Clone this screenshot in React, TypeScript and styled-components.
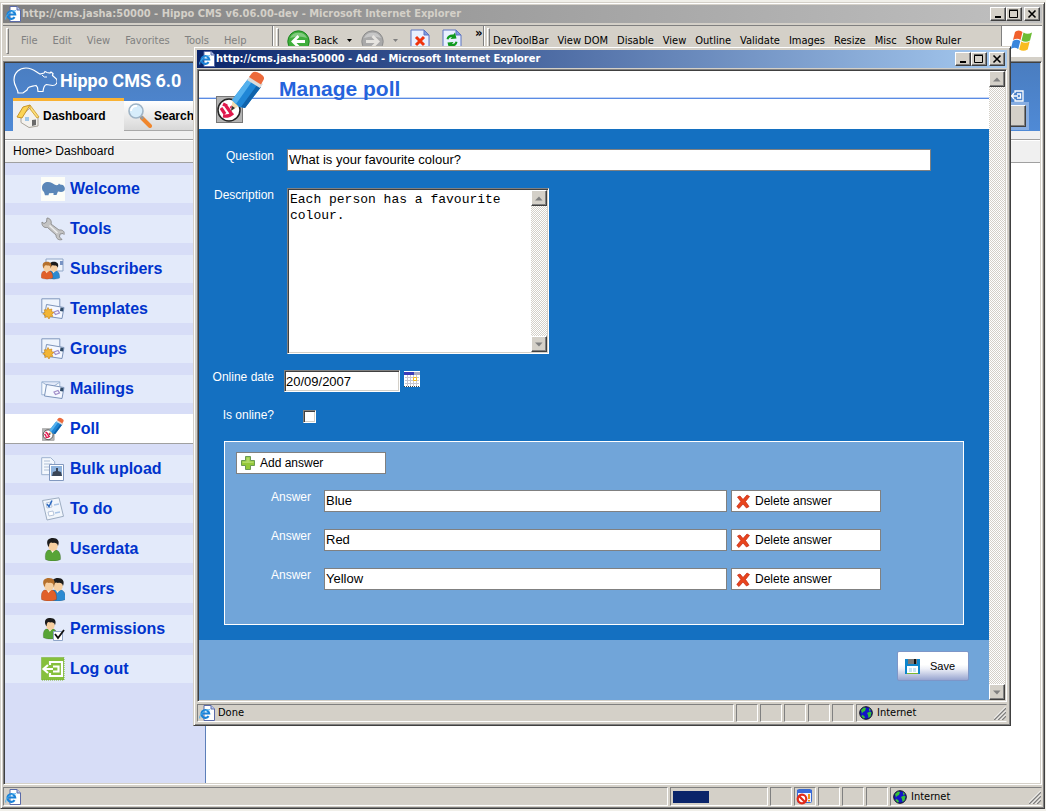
import React from "react";
import styled, { createGlobalStyle, css } from "styled-components";

const face = "#d4d0c8";
const ui = `"DejaVu Sans Condensed", "Noto Sans", sans-serif`;
const arial = `"Liberation Sans", Arial, sans-serif`;

const Global = createGlobalStyle`
  *, *::before, *::after { box-sizing: border-box; }
  html, body, #root { height: 100%; }
  body { margin: 0; background: #f0efe9; font-family: ${arial}; font-size: 12px; color: #000; }
  button, input, textarea { font-family: inherit; color: inherit; margin: 0; border-radius: 0; }
  svg { display: block; flex: none; }
`;

/* ---------- window chrome ---------- */

const Desktop = styled.div`
  position: relative;
  display: flex;
  min-height: 100vh;
  padding: 2px 1px 2px 0;
`;

const windowFrame = css`
  display: flex;
  flex-direction: column;
  background: ${face};
  border: 1px solid;
  border-color: ${face} #404040 #404040 ${face};
  box-shadow: inset 1px 1px #fff, inset -1px -1px #808080;
`;

const MainWindow = styled.div`
  ${windowFrame}
  flex: 1;
  min-width: 0;
  padding: 2px;
`;

const Dialog = styled.section`
  ${windowFrame}
  position: absolute;
  inset: 46px 35px 85px 193px;
  padding: 3px;
`;

const TitleBar = styled.header<{ $active?: boolean }>`
  display: flex;
  align-items: center;
  height: 18px;
  margin-bottom: 1px;
  padding: 0 2px;
  gap: 1px;
  font: bold 11px/18px ${ui};
  white-space: nowrap;
  color: ${(p) => (p.$active ? "#fff" : face)};
  background: ${(p) =>
    p.$active
      ? "linear-gradient(90deg, #0a246a, #a6caf0)"
      : "linear-gradient(90deg, #808080, #c0c0c0)"};
`;

const TitleText = styled.span`
  flex: 1;
  overflow: hidden;
`;

const raised = css`
  background: ${face};
  border: 1px solid;
  border-color: #fff #404040 #404040 #fff;
  box-shadow: inset -1px -1px #808080;
`;

const CaptionGroup = styled.div`
  display: flex;
`;

const CaptionButton = styled.button`
  ${raised}
  display: grid;
  place-items: center;
  width: 16px;
  height: 14px;
  padding: 0;
  &:last-child { margin-left: 2px; }
`;

const Client = styled.div`
  display: flex;
  flex: 1;
  min-height: 0;
  border: 1px solid;
  border-color: #808080 #fff #fff #808080;
  box-shadow: inset 1px 1px #404040, inset -1px -1px ${face};
  padding: 1px;
`;

const StatusBar = styled.footer<{ $h: number }>`
  display: flex;
  gap: 2px;
  height: ${(p) => p.$h}px;
  margin-top: 2px;
  font: 11px/16px ${ui};
`;

const StatusCell = styled.div<{ $w?: number }>`
  display: flex;
  align-items: center;
  gap: 3px;
  padding-left: 1px;
  overflow: hidden;
  border: 1px solid;
  border-color: #808080 #fff #fff #808080;
  ${(p) => (p.$w ? `flex: none; width: ${p.$w}px;` : "flex: 1;")}
`;

const ZoneCell = styled(StatusCell)`
  gap: 4px;
  border-right-color: ${face};
  padding-left: 2px;
`;

const ZoneName = styled.span`
  flex: 1;
`;

const Progress = styled.div`
  width: 36px;
  height: 12px;
  margin-left: 1px;
  background: #0a246a;
`;

/* ---------- browser toolbar ---------- */

const Toolbar = styled.div`
  display: flex;
  height: 32px;
  margin: 1px 0 4px;
  border-top: 1px solid #808080;
  border-bottom: 1px solid #fff;
  font: 11px/14px ${ui};
  white-space: nowrap;
`;

const Band = styled.div<{ $w?: number; $gap: number }>`
  display: flex;
  align-items: center;
  gap: ${(p) => p.$gap}px;
  padding-left: 3px;
  border-right: 1px solid #808080;
  box-shadow: 1px 0 #fff;
  ${(p) => (p.$w ? `flex: none; width: ${p.$w}px;` : "flex: 1;")}
`;

const Grip = styled.i`
  width: 3px;
  height: 26px;
  border: 1px solid;
  border-color: #fff #808080 #808080 #fff;
`;

const MenuButton = styled.button<{ $muted?: boolean }>`
  padding: 0;
  border: 0;
  background: none;
  font: inherit;
  color: ${(p) => (p.$muted ? "#808080" : "#000")};
`;

const MenuGroup = styled.nav<{ $gap: number; $pad: number }>`
  display: flex;
  gap: ${(p) => p.$gap}px;
  padding-left: ${(p) => p.$pad}px;
`;

const ToolButton = styled(MenuButton)`
  display: flex;
  align-items: center;
  gap: 4px;
`;

const PageTools = styled.div`
  display: flex;
  gap: 12px;
  padding: 0 5px 0 3px;
`;

const Chevron = styled.span`
  align-self: flex-start;
  font: bold 13px/14px ${ui};
`;

const Brand = styled.div`
  display: grid;
  place-items: center;
  width: 40px;
  background: #fff;
`;

/* ---------- CMS page behind the dialog ---------- */

const CmsPage = styled.div`
  flex: 1;
  display: flex;
  flex-direction: column;
  min-width: 0;
  background: #fff;
`;

const CmsHeader = styled.div`
  display: flex;
  justify-content: space-between;
  height: 68px;
  padding: 0 11px 0 8px;
  background: linear-gradient(#4a7dc0, #4f8ad6);
`;

const Logo = styled.div`
  display: flex;
  align-items: center;
  height: 35px;
  gap: 3px;
  color: #fff;
  font: bold 18px/35px Roboto, sans-serif;
  white-space: nowrap;
`;

const Tabs = styled.nav`
  display: flex;
`;

const Tab = styled.a<{ $active?: boolean }>`
  display: flex;
  align-items: center;
  gap: 2px;
  width: 111px;
  height: 33px;
  padding-left: 3px;
  border-top: 3px solid ${(p) => (p.$active ? "#f9b233" : "transparent")};
  border-bottom: ${(p) => (p.$active ? "0" : "1px solid #a8a8a8")};
  background: ${(p) => (p.$active ? "#f0f0f0" : "linear-gradient(#fff, #d8d8d8)")};
  background-clip: padding-box;
  color: #000;
  font-weight: bold;
  text-decoration: none;
`;

const HeaderActions = styled.div`
  display: flex;
  flex-direction: column;
  align-items: flex-end;
  padding-top: 27px;
`;

const IconLink = styled.a`
  padding-right: 5px;
`;

const HeaderButton = styled.button`
  ${raised}
  width: 60px;
  height: 22px;
  margin: 3px 3px 0 0;
  outline: 3px solid #88aee2;
`;

const HeaderStrip = styled.div`
  height: 9px;
  background: #f0f0f0;
  border-bottom: 1px solid #a0a0a0;
`;

const Breadcrumb = styled.div`
  height: 23px;
  padding-left: 8px;
  line-height: 21px;
  background: #f0f0f0;
  border-top: 1px solid #fff;
  border-bottom: 1px solid #a0a0a0;
`;

const CmsBody = styled.div`
  display: flex;
  flex: 1;
`;

const Sidebar = styled.nav`
  display: flex;
  flex-direction: column;
  gap: 12px;
  width: 201px;
  padding-top: 12px;
  background: #d7ddf7;
  border-right: 1px solid #5c7fb9;
`;

const SideItem = styled.a<{ $active?: boolean }>`
  display: flex;
  align-items: center;
  gap: 5px;
  height: 28px;
  padding-left: 36px;
  background: #e3eafa;
  color: #03c;
  font-size: 16px;
  font-weight: bold;
  text-decoration: none;
  ${(p) =>
    p.$active &&
    css`
      height: 30px;
      margin: -1px 0;
      background: #fff;
      border-bottom: 1px solid #a0a0a0;
    `}
`;

/* ---------- poll form ---------- */

const PollPage = styled.main`
  flex: 1;
  display: flex;
  flex-direction: column;
  min-width: 0;
`;

const PollHeader = styled.div`
  display: flex;
  gap: 15px;
  height: 58px;
  padding-left: 15px;
  background: linear-gradient(transparent 26px, #c5d6f6 26px, #c5d6f6 27px, #5a8be4 27px, #5a8be4 28px, transparent 28px) #fff;
`;

const PollTitle = styled.h1`
  margin: 0;
  font: bold 21px/36px ${arial};
  color: #2563dc;
`;

const Form = styled.form`
  flex: 1;
  display: flex;
  flex-direction: column;
`;

const Fields = styled.div`
  display: flex;
  flex-direction: column;
  gap: 16px;
  padding: 20px 25px 15px 0;
  background: #1470c1;
`;

const FieldRow = styled.div<{ $gap: number; $h: number }>`
  display: flex;
  align-items: flex-start;
  gap: ${(p) => p.$gap}px;
  min-height: ${(p) => p.$h}px;
  padding-right: 33px;
`;

const Label = styled.label`
  width: 75px;
  flex: none;
  text-align: right;
  line-height: 14px;
  color: #fff;
`;

const TextInput = styled.input`
  flex: 1;
  min-width: 0;
  height: 22px;
  padding: 0 1px 1px;
  border: 1px solid #808080;
  background: #fff;
  font-size: 13px;
  outline: 0;
`;

const sunken = css`
  border: 1px solid;
  border-color: #808080 #fff #fff #808080;
  box-shadow: inset 1px 1px #404040, inset -1px -1px ${face};
  background: #fff;
`;

const DateInput = styled.input`
  ${sunken}
  width: 116px;
  height: 22px;
  padding: 1px;
  font-size: 13px;
`;

const DateGroup = styled.div`
  display: flex;
  gap: 4px;
`;

const CalendarButton = styled.button`
  padding: 1px 0 0;
  border: 0;
  background: none;
  height: 17px;
`;

const CheckBox = styled.input`
  ${sunken}
  appearance: none;
  width: 13px;
  height: 13px;
  margin-top: 2px;
`;

const TextBox = styled.div`
  ${sunken}
  display: flex;
  width: 262px;
  height: 166px;
  padding: 1px;
`;

const TextArea = styled.textarea`
  flex: 1;
  min-width: 0;
  padding: 2px 1px;
  border: 0;
  outline: 0;
  resize: none;
  overflow: hidden;
  background: transparent;
  font: 13px/16px "Liberation Mono", "Courier New", monospace;
`;

const ScrollTrack = styled.div`
  display: flex;
  flex-direction: column;
  justify-content: space-between;
  flex: none;
  width: 16px;
  background: repeating-conic-gradient(#fff 0 25%, ${face} 0 50%) 0 0 / 2px 2px;
`;

const ScrollButton = styled.button`
  ${raised}
  display: grid;
  place-items: center;
  width: 16px;
  height: 16px;
  padding: 0;
`;

const Answers = styled.fieldset`
  min-width: 0;
  margin: 0 0 0 25px;
  padding: 10px 11px 34px;
  border: 1px solid #fff;
  background: #71a5d9;
`;

const AnswerList = styled.div`
  display: flex;
  flex-direction: column;
  gap: 17px;
  padding: 16px 71px 0 0;
`;

const AnswerRow = styled.div`
  display: flex;
  gap: 4px;
`;

const AnswerField = styled.div`
  display: flex;
  flex: 1;
  gap: 13px;
`;

const ActionButton = styled.button`
  display: flex;
  align-items: center;
  gap: 5px;
  width: 150px;
  height: 22px;
  padding: 0 4px;
  border: 1px solid #808080;
  background: #fff;
  font-size: 12px;
`;

const FormFooter = styled.div`
  flex: 1;
  display: flex;
  justify-content: flex-end;
  align-items: flex-start;
  padding: 11px 20px 0;
  background: #71a5d9;
`;

const SaveButton = styled.button`
  display: flex;
  align-items: center;
  gap: 10px;
  width: 72px;
  height: 30px;
  padding: 0 7px;
  border: 1px solid #7d96c8;
  border-radius: 2px;
  background: linear-gradient(#fff 45%, #eef0f8 60%, #98a5d0);
  font-size: 11px;
`;

/* ---------- icons ---------- */

const IePage = () => (
  <svg width="16" height="16" viewBox="0 0 16 16">
    <path d="M5 .5h7l3.500 3.500v11.500H5z" fill="#fff" stroke="#5a6aa8" />
    <path d="M12 .5V4h3.500" fill="#b9c8ee" stroke="#5a6aa8" />
    <path d="M9.600 11.100A3.900 3.900 0 1 1 10.200 8.500H3" fill="none" stroke="#1a82d8" strokeWidth="2.100" />
    <path d="M.8 13.500C-.5 10 7 3.500 11.200 4.800" fill="none" stroke="#4db1f0" strokeWidth="1" />
  </svg>
);

const Globe = () => (
  <svg width="14" height="14" viewBox="0 0 14 14">
    <circle cx="7" cy="7" r="6.300" fill="#1414c8" stroke="#111" />
    <path d="M2 4l3-2.500 2 .5-1 3-2 1-1 1.500zM8 7l3-1.500 1.500 1-1 4-2 1.500-.5-3zM10 2l2 2-2 1z" fill="#35c235" />
    <path d="M3 9.500l2.500 2.500" stroke="#35c235" strokeWidth="1.800" />
  </svg>
);

const Blocked = () => (
  <svg width="17" height="16" viewBox="0 0 17 16">
    <rect x="1.500" y=".5" width="14" height="13" rx="1" fill="#eef3ff" stroke="#3a6ad0" />
    <path d="M1 1h15v3H1z" fill="#3a6ad8" />
    <path d="M12 5h2v5h-2zM12 11h2v1.500h-2z" fill="#f09018" />
    <circle cx="6" cy="10" r="4.300" fill="#fff" stroke="#e02a1a" strokeWidth="2.200" />
    <path d="M3 7l6 6" stroke="#e02a1a" strokeWidth="2.200" />
  </svg>
);

const ResizeGrip = () => (
  <svg width="12" height="14" viewBox="0 0 12 14">
    <path d="M0 14L12 2M4 14l8-8M8 14l4-4" stroke="#808080" strokeWidth="1.500" />
    <path d="M-1.500 14L12 .5M2.500 14L12 4.500M6.500 14L12 8.500" stroke="#fff" />
  </svg>
);

const Arrow = ({ down, color = "#808080" }: { down?: boolean; color?: string }) => (
  <svg width="8" height="5" viewBox="0 0 8 5">
    <path d={down ? "M0 .5h7.500L4 4.500z" : "M0 4.500h7.500L4 .5z"} fill={color} />
  </svg>
);

const DropArrow = ({ color = "#808080" }: { color?: string }) => (
  <svg width="7" height="4" viewBox="0 0 7 4">
    <path d="M1 0h5L3.500 3z" fill={color} />
  </svg>
);

const RoundArrow = ({ back }: { back?: boolean }) => (
  <svg width="23" height="23" viewBox="0 0 23 23">
    <circle cx="11.500" cy="11.500" r="10.700" fill={back ? "#3fae3c" : "#a9a9a9"} stroke={back ? "#1d8420" : "#8d8d8d"} />
    <path d="M3 8a9 8 0 0 1 17 0q-8-3-17 0z" fill="#fff" opacity=".35" />
    <path
      d={back ? "M18 11.500H6M11.500 6L6 11.500l5.500 5.500" : "M5 11.500h12M11.500 6l5.500 5.500-5.500 5.500"}
      fill="none"
      stroke={back ? "#fff" : "#e6e4e0"}
      strokeWidth="2.800"
    />
  </svg>
);

const PageIcon = ({ refresh }: { refresh?: boolean }) => (
  <svg width="20" height="24" viewBox="0 0 20 24">
    <path d="M1 1h13l5 5v17.500H1z" fill="#e8efff" stroke="#5c74c0" />
    <path d="M14 1v5h5z" fill="#7f9ae0" stroke="#5c74c0" />
    {refresh ? (
      <path d="M4.500 10q1-5 7-4.500l1.500-2 1.500 6-6 .5 1.500-2q-3 0-3.500 2.500zM15.500 13q-1 5-7 4.500l-1.500 2-1.500-6 6-.5-1.500 2q3 0 3.500-2.500z" fill="#0e9a1e" />
    ) : (
      <path d="M6 8l8 8M14 8l-8 8" stroke="#f0330c" strokeWidth="3" />
    )}
  </svg>
);

const Flag = () => (
  <svg width="24" height="24" viewBox="0 0 24 24">
    <path d="M5 3q4-3 7.500 0l-2 8q-3-2.500-7.500 0z" fill="#f0602c" />
    <path d="M13.500 3.500q4 2.500 8.500 0l-2 8q-4 2.500-8.500 0z" fill="#6cbc34" />
    <path d="M2.800 12q4-2.500 7.500 0l-2 8q-3.500-2.500-7.500 0z" fill="#3a86dc" />
    <path d="M11.200 12.500q4 2.500 8.500 0l-2 8q-4.500 2.500-8.500 0z" fill="#f8bc20" />
  </svg>
);

const HippoLogo = () => (
  <svg width="44" height="28" viewBox="0 0 44 28">
    <path
      d="M5 26C5 22 1 19 1 13 1 5 7 1 13 1c7 0 10 4 14 6l4-1 1-1.500 2 1 3 .5 1-1 2 1.500-.5 2 4 3.500c2 4-1 6.500-4 6.500l-6-1c-3 1-3 4-3.500 7H25l-.5-4-1.500-2c-4 1-7 1-8 2.500L14 23l-4 3z"
      fill="none"
      stroke="#fff"
      strokeWidth="1.200"
    />
    <path d="M29 8q2 3 5 2" fill="none" stroke="#fff" />
  </svg>
);

const House = () => (
  <svg width="25" height="24" viewBox="0 0 25 24">
    <path d="M5 12l9-8 8 9v9l-9 1.500-8-5z" fill="#f4f2ee" stroke="#a9a49a" />
    <path d="M1 13L7 3l7-2-8 13z" fill="#fbd455" stroke="#c99526" />
    <path d="M14 1l9 12-2 1-7-9z" fill="#fce07c" stroke="#c99526" strokeWidth=".8" />
    <path d="M16 22v-6l4-.5V21z" fill="#6a6a6a" />
    <path d="M9 13h4v4H9z" fill="#9fc7ea" />
  </svg>
);

const Magnifier = () => (
  <svg width="25" height="25" viewBox="0 0 25 25">
    <path d="M15 15l8 8" stroke="#f0862c" strokeWidth="4" strokeLinecap="round" />
    <path d="M13 12l3 4" stroke="#999" strokeWidth="3" />
    <circle cx="9" cy="8" r="7" fill="#d7edfb" stroke="#9fb4c6" strokeWidth="1.600" />
    <path d="M4 8a5 5 0 0 1 6-5" fill="none" stroke="#fff" strokeWidth="2" />
  </svg>
);

const exitPath = "M9 8V5h12v14H9v-3M12 9.500h5.500v5H12M2 12h10M7 8l-4.500 4L7 16";

const ExitSmall = () => (
  <svg width="13" height="12" viewBox="0 0 13 12">
    <path d="M4 3V1h8v10H4V9M6 4h3.500v4H6M0 6h7M3 3L.7 6 3 9" fill="none" stroke="#fff" strokeWidth="1.300" />
  </svg>
);

const Hippo = () => (
  <svg width="24" height="24" viewBox="0 0 24 24">
    <path d="M0 0h24v24H0z" fill="#fcfdf8" />
    <path d="M1 11c0-6 6-7 10-5 2 1.500 4 2.500 6 2l1-1.500 1 1 3 .5c2 2 2.500 4 1 6-2 1.500-4 1-6 .5l-1.500 3.500h-3v-2l-4.500.3-.5 2H4L3 15c-1-1-2-2-2-4z" fill="#5b87b8" />
  </svg>
);

const Wrench = () => (
  <svg width="24" height="24" viewBox="0 0 24 24">
    <path d="M6 1l-.5 4L3 6.500 1 5c-.5 4 2 6 5.500 5.500l8.500 7.500c0 4 3 5.500 6 4.500l-2.500-2.500.5-3 3-.5 1 1c1-3-1.500-5-5-4.500L10 7c1-3-1-6-4-6z" fill="#c4c4c4" stroke="#8a8a8a" strokeWidth=".9" />
    <path d="M8.500 8.500l8 7.500" stroke="#eee" strokeWidth="1.500" />
  </svg>
);

const Person = ({ x = 0, hair, body }: { x?: number; hair: string; body: string }) => (
  <g transform={`translate(${x} 0)`}>
    <path d="M.5 22.500c-1-6 1-9 3-9.500h8c3 1 4.500 5 4 9.500-4 2-11 2-15 0z" fill={body} stroke="#00000044" strokeWidth=".6" />
    <path d="M5 12l2.500 4 3-4z" fill="#fff4e4" />
    <ellipse cx="8" cy="8.500" rx="4.800" ry="5.500" fill="#f7cfa0" />
    <path d="M3 9C.5 3 4 1 8 1c4.500 0 7 3 5 8C12.500 6 10 5.500 8 6 6 5 4 5 4 10z" fill={hair} />
  </g>
);

const UserIcon = () => (
  <svg width="24" height="24" viewBox="0 0 24 24">
    <Person x={4} hair="#1c1c1c" body="#57a436" />
  </svg>
);

const UsersIcon = () => (
  <svg width="24" height="24" viewBox="0 0 24 24">
    <Person x={9} hair="#1c1c1c" body="#2b8ad2" />
    <Person hair="#b5702c" body="#e0602a" />
  </svg>
);

const SubscribersIcon = () => (
  <svg width="24" height="24" viewBox="0 0 24 24">
    <path d="M5 2h17v12H5z" fill="#eef4fc" stroke="#8fa6c8" />
    <path d="M19 4h3v4h-3z" fill="#7894c4" />
    <g transform="translate(0 4) scale(.76)">
      <Person x={9} hair="#1c1c1c" body="#2b8ad2" />
      <Person hair="#b5702c" body="#e0602a" />
    </g>
  </svg>
);

const Cards = ({ star }: { star?: boolean }) => (
  <svg width="24" height="24" viewBox="0 0 24 24">
    {star && <path d="M.8 1.800h18v14h-18z" fill="#eef4fc" stroke="#8097bd" />}
    {!star && <path d="M.8 4.800h18v13h-18zM1 5l9 6 9-6" fill="#f6faff" stroke="#9db4d4" />}
    <path d="M5.500 7.500l17.500 3-2 11-17.500-2.500z" fill="#f4f8ff" stroke="#7c94ba" />
    <path d="M19.500 10.500l3 .5-.5 3.500-3-.5z" fill="#2f4a68" />
    <path d="M13 15l4-1.500 1.500 2.500-4 1.500z" fill="none" stroke="#a08cc8" strokeWidth="1.200" />
    {star && (
      <path d="M7 10.500l1.300 2.200 2.500-.7-.3 2.500 2.500 1-2.200 1.500 1 2.500-2.500-.2L8 22l-1.600-2.300-2.600.8.500-2.600-2.500-1 2.200-1.600-.8-2.500 2.600.2z" fill="#f2b535" stroke="#c8871c" strokeWidth=".7" />
    )}
  </svg>
);

const StarCards = () => <Cards star />;
const PlainCards = () => <Cards />;

const PencilArt = () => (
  <>
    <rect x="2.500" y="26.500" width="26" height="26" fill="#b3b3b3" stroke="#777" />
    <circle cx="15" cy="40" r="11" fill="#fff" stroke="#222" strokeWidth="1.500" />
    <path d="M9 34l4 2M7 38l4 6M12 36l5 7M17 36l2 3M9 46q6 1 10-3" fill="none" stroke="#e0184c" strokeWidth="3.200" />
    <path d="M17 41l2-13 9 6z" fill="#f3dcae" />
    <path d="M17 41l1-5 3 2z" fill="#333" />
    <path d="M18 30L34 9l13 8-16 21-6-1z" fill="#1f86d6" />
    <path d="M18 30L34 9l4 2.500L22 34z" fill="#54b1ee" />
    <path d="M27 37l16-22 4 2-16 21z" fill="#0f62ab" />
    <path d="M33 10l3-4 13 8-3 4z" fill="#dcdcdc" />
    <path d="M35 7l3-4q3-2.500 8 .5t4 5.500l-3 5.500z" fill="#ec6a3c" />
  </>
);

const PollIcon = () => (
  <svg width="24" height="24" viewBox="0 0 52 54">
    <PencilArt />
  </svg>
);

const PollIconLarge = () => (
  <svg width="50" height="54" viewBox="0 1 50 54">
    <PencilArt />
  </svg>
);

const Upload = () => (
  <svg width="24" height="24" viewBox="0 0 24 24">
    <path d="M.7.700h9l4 4v13h-13z" fill="#f4f8fd" stroke="#9db2cf" />
    <path d="M3 4h6M3 7h8M3 10h5M3 13h5" stroke="#aebfd6" />
    <path d="M8.500 7.500h14v16h-14z" fill="#fff" stroke="#8299bf" />
    <path d="M10 9h11v10H10z" fill="#8fb3dc" />
    <path d="M11 19l1-4 3-1V11h2v3l3 1 1 4z" fill="#3b4656" />
  </svg>
);

const Todo = () => (
  <svg width="24" height="24" viewBox="0 0 24 24">
    <path d="M1.500 3.500L18 .8l4.500 18.500L6 23z" fill="#f1f6fc" stroke="#9dadc2" />
    <path d="M5 6l5-1 1 5-5 1zM7 15l5-1 1 4-5 1z" fill="#fff" stroke="#a6b8d2" strokeWidth=".8" />
    <path d="M6 7l2 2.500L11 3.500" fill="none" stroke="#2867c0" strokeWidth="1.500" />
    <path d="M13 8l5-1M14 16l5-1" stroke="#a9c4e6" strokeWidth="1.500" />
  </svg>
);

const Permission = () => (
  <svg width="24" height="24" viewBox="0 0 24 24">
    <g transform="translate(2 0) scale(.92)">
      <Person hair="#1c1c1c" body="#57a436" />
    </g>
    <path d="M12.500 14.500h9v9h-9z" fill="#fff" stroke="#8fa5c8" />
    <path d="M14 17l3 4 6-8" fill="none" stroke="#111" strokeWidth="1.800" />
  </svg>
);

const LogOut = () => (
  <svg width="24" height="24" viewBox="0 0 24 24">
    <path d="M.5.500h22.500v22.500H.5z" fill="#86c03c" stroke="#74ad31" strokeDasharray="1 1" />
    <path d={exitPath} fill="none" stroke="#fff" strokeWidth="2.200" />
  </svg>
);

const Calendar = () => (
  <svg width="16" height="16" viewBox="0 0 16 16">
    <path d="M0 0h16v16H0z" fill="#fff" />
    <path d="M0 1h10v3H0z" fill="#3b3bb8" />
    <path d="M10 1h6v3h-6z" fill="#a9a9c4" />
    <path d="M1 6.500h14M1 9.500h14M1 12.500h14M3.500 4v11M6.500 4v11M9.500 4v11M12.500 4v11" stroke="#c9c5cf" />
    <path d="M9.500 6.500h3v3h-3z" fill="#fff" stroke="#f4bb1c" />
    <path d="M0 15.500h16" stroke="#444" strokeDasharray="1 1" />
  </svg>
);

const Plus = () => (
  <svg width="14" height="14" viewBox="0 0 14 14">
    <path d="M4.500.500h5v4h4v5h-4v4h-5v-4h-4v-5h4z" fill="#94c83a" stroke="#6a9a52" />
    <path d="M5.500 1.500h3v4h4v1.500h-11V5.500h4z" fill="#bfe07c" opacity=".7" />
  </svg>
);

const Cross = () => (
  <svg width="14" height="15" viewBox="0 0 14 15">
    <path d="M4 2l3 3.500L11 1l2.500 1.500-4 5 3.500 5L10.500 14 7 10l-4 4.500L.8 12.500l4-5L1.500 3z" fill="#e8441c" stroke="#c02410" strokeWidth=".7" />
  </svg>
);

const Floppy = () => (
  <svg width="15" height="15" viewBox="0 0 15 15">
    <path d="M0 0h15v15H0z" fill="#0f86cc" />
    <path d="M3 0h9v5H3z" fill="#777" />
    <path d="M9 0h2v5H9z" fill="#111" />
    <path d="M2 7h11v7H2z" fill="#fff" />
    <path d="M4 10h3M8 10h3M4 12h3M8 12h3" stroke="#8fc8ec" />
    <path d="M2 14h11v1H2z" fill="#7cb82c" />
  </svg>
);

/* ---------- composition ---------- */

const WindowButtons = () => (
  <CaptionGroup>
    <CaptionButton aria-label="Minimize">
      <svg width="10" height="10" viewBox="0 0 10 10"><path d="M2 7h6v2H2z" /></svg>
    </CaptionButton>
    <CaptionButton aria-label="Maximize">
      <svg width="10" height="10" viewBox="0 0 10 10"><path d="M.5 1.500h8v7h-8zM0 1h9" fill="none" stroke="#000" /></svg>
    </CaptionButton>
    <CaptionButton aria-label="Close">
      <svg width="10" height="10" viewBox="0 0 10 10"><path d="M1.500 1.500l7 7M8.500 1.500l-7 7" stroke="#000" strokeWidth="1.600" /></svg>
    </CaptionButton>
  </CaptionGroup>
);

const ScrollBar = () => (
  <ScrollTrack>
    <ScrollButton type="button" aria-label="Scroll up"><Arrow /></ScrollButton>
    <ScrollButton type="button" aria-label="Scroll down"><Arrow down /></ScrollButton>
  </ScrollTrack>
);

const menus = ["File", "Edit", "View", "Favorites", "Tools", "Help"];
const devTools = ["DevToolBar", "View DOM", "Disable", "View", "Outline", "Validate", "Images", "Resize", "Misc", "Show Ruler"];

const sections: { name: string; icon: React.FC; active?: boolean }[] = [
  { name: "Welcome", icon: Hippo },
  { name: "Tools", icon: Wrench },
  { name: "Subscribers", icon: SubscribersIcon },
  { name: "Templates", icon: StarCards },
  { name: "Groups", icon: StarCards },
  { name: "Mailings", icon: PlainCards },
  { name: "Poll", icon: PollIcon, active: true },
  { name: "Bulk upload", icon: Upload },
  { name: "To do", icon: Todo },
  { name: "Userdata", icon: UserIcon },
  { name: "Users", icon: UsersIcon },
  { name: "Permissions", icon: Permission },
  { name: "Log out", icon: LogOut },
];

const answers = ["Blue", "Red", "Yellow"];

const PollDialog = () => (
  <Dialog role="dialog" aria-label="Manage poll">
    <TitleBar $active>
      <IePage />
      <TitleText>http://cms.jasha:50000 - Add - Microsoft Internet Explorer</TitleText>
      <WindowButtons />
    </TitleBar>
    <Client>
      <PollPage>
        <PollHeader>
          <PollIconLarge />
          <PollTitle>Manage poll</PollTitle>
        </PollHeader>
        <Form onSubmit={(e) => e.preventDefault()}>
          <Fields>
            <FieldRow $gap={13} $h={23}>
              <Label htmlFor="question">Question</Label>
              <TextInput id="question" defaultValue="What is your favourite colour?" />
            </FieldRow>
            <FieldRow $gap={13} $h={166}>
              <Label htmlFor="description">Description</Label>
              <TextBox>
                <TextArea id="description" defaultValue="Each person has a favourite colour." />
                <ScrollBar />
              </TextBox>
            </FieldRow>
            <FieldRow $gap={10} $h={22}>
              <Label htmlFor="date">Online date</Label>
              <DateGroup>
                <DateInput id="date" defaultValue="20/09/2007" />
                <CalendarButton type="button" aria-label="Pick a date"><Calendar /></CalendarButton>
              </DateGroup>
            </FieldRow>
            <FieldRow $gap={29} $h={17}>
              <Label htmlFor="online">Is online?</Label>
              <CheckBox id="online" type="checkbox" />
            </FieldRow>
            <Answers>
              <ActionButton type="button"><Plus />Add answer</ActionButton>
              <AnswerList>
                {answers.map((a) => (
                  <AnswerRow key={a}>
                    <AnswerField>
                      <Label htmlFor={`answer-${a}`}>Answer</Label>
                      <TextInput id={`answer-${a}`} defaultValue={a} />
                    </AnswerField>
                    <ActionButton type="button"><Cross />Delete answer</ActionButton>
                  </AnswerRow>
                ))}
              </AnswerList>
            </Answers>
          </Fields>
          <FormFooter>
            <SaveButton type="submit"><Floppy />Save</SaveButton>
          </FormFooter>
        </Form>
      </PollPage>
      <ScrollBar />
    </Client>
    <StatusBar $h={18}>
      <StatusCell><IePage />Done</StatusCell>
      {[0, 1, 2, 3, 4].map((i) => <StatusCell key={i} $w={22} />)}
      <ZoneCell $w={151}><Globe /><ZoneName>Internet</ZoneName><ResizeGrip /></ZoneCell>
    </StatusBar>
  </Dialog>
);

export default function App() {
  return (
    <Desktop>
      <Global />
      <MainWindow>
        <TitleBar>
          <IePage />
          <TitleText>http://cms.jasha:50000 - Hippo CMS v6.06.00-dev - Microsoft Internet Explorer</TitleText>
          <WindowButtons />
        </TitleBar>
        <Toolbar>
          <Band $w={270} $gap={0}>
            <Grip />
            <MenuGroup $gap={15} $pad={12}>
              {menus.map((m) => <MenuButton key={m} $muted>{m}</MenuButton>)}
            </MenuGroup>
          </Band>
          <Band $w={211} $gap={8}>
            <Grip />
            <ToolButton><RoundArrow back />Back</ToolButton>
            <DropArrow color="#000" />
            <ToolButton aria-label="Forward"><RoundArrow /></ToolButton>
            <DropArrow />
            <PageTools>
              <ToolButton aria-label="Stop"><PageIcon /></ToolButton>
              <ToolButton aria-label="Refresh"><PageIcon refresh /></ToolButton>
            </PageTools>
            <Chevron>»</Chevron>
          </Band>
          <Band $gap={0}>
            <Grip />
            <MenuGroup $gap={9} $pad={3}>
              {devTools.map((m) => <MenuButton key={m}>{m}</MenuButton>)}
            </MenuGroup>
          </Band>
          <Brand><Flag /></Brand>
        </Toolbar>
        <Client>
          <CmsPage>
            <CmsHeader>
              <div>
                <Logo><HippoLogo />Hippo CMS 6.0</Logo>
                <Tabs>
                  <Tab href="#dashboard" $active><House />Dashboard</Tab>
                  <Tab href="#search"><Magnifier />Search</Tab>
                </Tabs>
              </div>
              <HeaderActions>
                <IconLink href="#logout" aria-label="Log out"><ExitSmall /></IconLink>
                <HeaderButton aria-label="Go" />
              </HeaderActions>
            </CmsHeader>
            <HeaderStrip />
            <Breadcrumb>Home&gt; Dashboard</Breadcrumb>
            <CmsBody>
              <Sidebar>
                {sections.map(({ name, icon: Icon, active }) => (
                  <SideItem key={name} href={`#${name}`} $active={active}><Icon />{name}</SideItem>
                ))}
              </Sidebar>
            </CmsBody>
          </CmsPage>
        </Client>
        <StatusBar $h={19}>
          <StatusCell><IePage /></StatusCell>
          <StatusCell $w={98}><Progress /></StatusCell>
          <StatusCell $w={22} />
          <StatusCell $w={22}><Blocked /></StatusCell>
          <StatusCell $w={22} />
          <StatusCell $w={22} />
          <StatusCell $w={22} />
          <ZoneCell $w={152}><Globe /><ZoneName>Internet</ZoneName><ResizeGrip /></ZoneCell>
        </StatusBar>
      </MainWindow>
      <PollDialog />
    </Desktop>
  );
}
